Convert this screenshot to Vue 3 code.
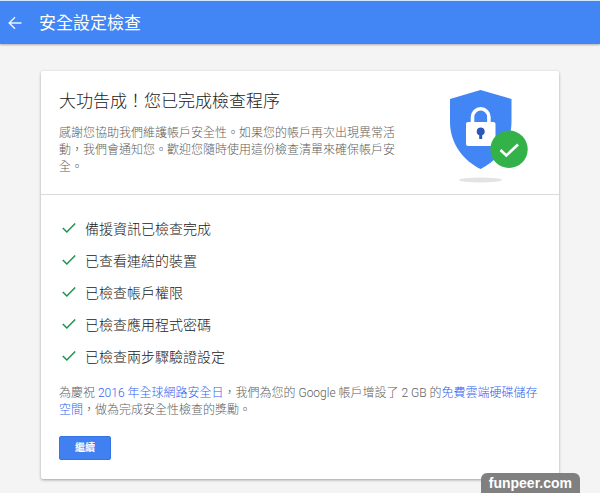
<script setup>
import { ref } from "vue";

const checks = ref([
  { id: 1, label: "備援資訊已檢查完成" },
  { id: 2, label: "已查看連結的裝置" },
  { id: 3, label: "已檢查帳戶權限" },
  { id: 4, label: "已檢查應用程式密碼" },
  { id: 5, label: "已檢查兩步驟驗證設定" },
]);
</script>

<template>
  <div class="page">
    <header class="top-bar">
      <button class="back" type="button" aria-label="返回">
        <svg width="14" height="14" viewBox="0 0 14 14">
          <path d="M13.500 7H1.500M7 1.200L1.200 7L7 12.800" />
        </svg>
      </button>
      <h1>安全設定檢查</h1>
    </header>

    <main class="card">
      <section class="intro">
        <div class="intro-text">
          <h2>大功告成！您已完成檢查程序</h2>
          <p>
            感謝您協助我們維護帳戶安全性。如果您的帳戶再次出現異常活動，我們會通知您。歡迎您隨時使用這份檢查清單來確保帳戶安全。
          </p>
        </div>
        <svg class="shield" width="80" height="94" viewBox="0 0 80 94">
          <ellipse cx="31.5" cy="91" rx="21.5" ry="2.4" fill="#e3e3e3" />
          <path
            d="M31.5 1L62.5 10V33C62.5 55 48 72 31.5 80C15 72 1 55 1 33V10Z"
            fill="#4285f4"
          />
          <path
            d="M23.5 34V28a8.2 8.2 0 0 1 16.4 0V34"
            fill="none"
            stroke="#fff"
            stroke-width="3.6"
          />
          <rect x="17" y="33" width="29.5" height="24" rx="2" fill="#fff" />
          <path
            d="M31.7 38.5a4 4 0 0 1 1.5 7.7V50h-3v-3.8a4 4 0 0 1 1.5-7.7Z"
            fill="#2a56b8"
          />
          <circle cx="60" cy="60.3" r="18.7" fill="#34b24a" />
          <path
            d="M51.5 61L57.3 66.500L69 55.500"
            fill="none"
            stroke="#fff"
            stroke-width="2.6"
          />
        </svg>
      </section>

      <section class="result">
        <ul class="checks">
          <li v-for="check in checks" :key="check.id">
            <svg width="14" height="12" viewBox="0 0 14 12">
              <path d="M0.8 6L4.8 10L13.2 1.5" />
            </svg>
            <span>{{ check.label }}</span>
          </li>
        </ul>
        <p>
          為慶祝 <a href="#">2016 年全球網路安全日</a>，我們為您的 Google
          帳戶增設了 2 GB 的<a href="#">免費雲端硬碟儲存空間</a>，做為完成安全性檢查的獎勵。
        </p>
        <button class="continue" type="button">繼續</button>
      </section>
    </main>

    <div class="watermark">funpeer.com</div>
  </div>
</template>

<style>
body {
  margin: 0;
  background: #f4f4f4;
}
</style>

<style scoped>
.page {
  min-height: 100vh;
  box-sizing: border-box;
  padding-bottom: 14px;
  font-family: Roboto, "Noto Sans CJK TC", sans-serif;
  color: #212121;
}

.top-bar {
  display: flex;
  align-items: center;
  gap: 17px;
  height: 43px;
  padding: 0 8px;
  border-top: 1px solid #cfe6fb;
  background: #4285f4;
  box-shadow: 0 1px 2px rgba(0, 0, 0, 0.3);
}

.back {
  display: flex;
  padding: 0;
  border: none;
  background: none;
  cursor: pointer;
}

.back path {
  fill: none;
  stroke: #e8f1ff;
  stroke-width: 1.5;
}

h1 {
  margin: 0;
  font-size: 17px;
  font-weight: 400;
  line-height: 24px;
  color: #fff;
}

.card {
  margin: 27px 41px 0;
  background: #fff;
  border-radius: 2px;
  box-shadow: 0 1px 3px rgba(0, 0, 0, 0.35);
}

.intro {
  display: flex;
  justify-content: space-between;
  padding: 18px 30px 11px 18px;
  border-bottom: 1px solid #dcdcdc;
}

.intro-text {
  flex: 0 1 340px;
}

h2 {
  margin: 0 0 12px;
  font-size: 17px;
  font-weight: 300;
  line-height: 24px;
}

p {
  margin: 0;
  font-size: 12px;
  font-weight: 300;
  line-height: 17px;
  color: #606060;
}

.shield {
  flex: none;
}

.result {
  padding: 17px 18px 19px;
}

.checks {
  margin: 0 0 13px;
  padding: 0;
  list-style: none;
}

.checks li {
  display: flex;
  align-items: center;
  gap: 9px;
  height: 32px;
  padding-left: 3px;
  font-size: 14px;
  font-weight: 300;
}

.checks path {
  fill: none;
  stroke: #1e9150;
  stroke-width: 1.5;
}

a {
  color: #2f62f0;
  text-decoration: none;
}

.continue {
  display: block;
  min-width: 52px;
  height: 24px;
  margin-top: 17px;
  padding: 0 15px;
  border: 1px solid #3574e2;
  border-radius: 2px;
  background: #4080f0;
  color: #fff;
  font-family: inherit;
  font-size: 10px;
  font-weight: 700;
  line-height: 22px;
  cursor: pointer;
}

.watermark {
  position: fixed;
  right: 20px;
  bottom: 0;
  padding: 0 8px;
  border-radius: 6px 6px 0 0;
  background: #808080;
  color: #fff;
  font-family: "Liberation Sans", Arial, sans-serif;
  font-size: 14px;
  font-weight: 700;
  line-height: 20px;
}
</style>
